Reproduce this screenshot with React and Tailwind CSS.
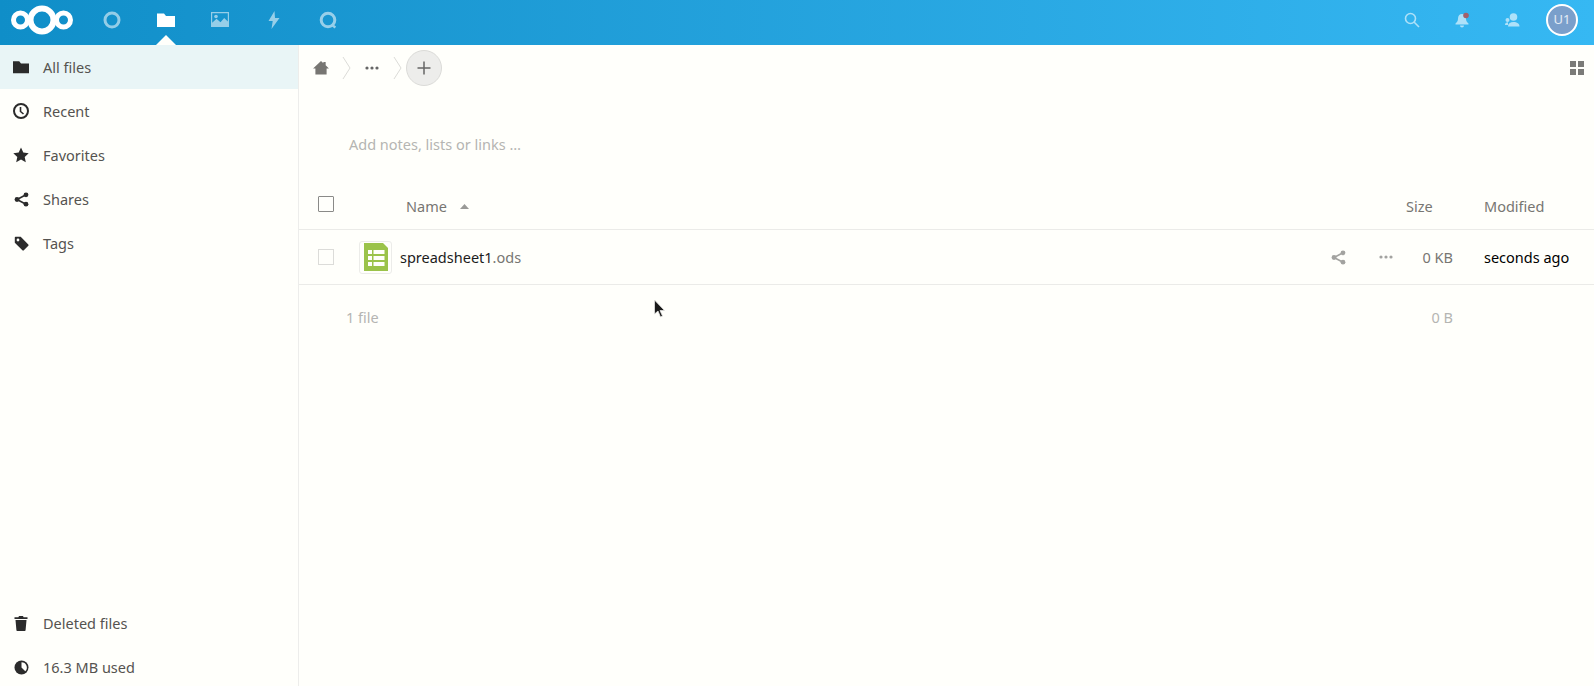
import React from "react";

const font = { fontFamily: '"Noto Sans", sans-serif' };

const Logo = () => (
  <svg width="62" height="30" viewBox="0 0 62 30" fill="none" stroke="#fff">
    <circle cx="31" cy="15" r="11.500" strokeWidth="6" />
    <circle cx="9.500" cy="15" r="7" strokeWidth="5" />
    <circle cx="52.500" cy="15" r="7" strokeWidth="5" />
  </svg>
);

const FolderIcon = ({ size = 18, color = "#fff" }) => (
  <svg width={size} height={size} viewBox="0 0 18 18" fill={color}>
    <path d="M0 2.500h7l2 2.500h9v11H0z" />
  </svg>
);

const navIcons = [
  <svg key="a" width="18" height="18" viewBox="0 0 18 18" fill="none" stroke="#fff" strokeWidth="3" opacity="0.55">
    <circle cx="9" cy="9" r="7" />
  </svg>,
  <FolderIcon key="b" />,
  <svg key="c" width="18" height="16" viewBox="0 0 18 16" opacity="0.55" fill="#fff">
    <path fillRule="evenodd" d="M0 0h18v15H0zM1.200 1.200v9.600l4.300-4 4 3.400 3.700-4.200 3.600 3.600V1.200z" />
    <circle cx="5" cy="4.500" r="1.800" />
  </svg>,
  <svg key="d" width="14" height="18" viewBox="0 0 14 18" fill="#fff" opacity="0.55">
    <path d="M7.500 0 1.500 10h4.200L4.500 18l8-11H8z" />
  </svg>,
  <svg key="e" width="18" height="18" viewBox="0 0 18 18" fill="none" stroke="#fff" strokeWidth="3" opacity="0.55">
    <circle cx="9" cy="9" r="6.800" />
    <path d="m13 14 3.400 2.400" strokeWidth="2.400" />
  </svg>,
];

const ClockIcon = () => (
  <svg width="16" height="16" viewBox="0 0 16 16" fill="none" stroke="#2b2b2b">
    <circle cx="8" cy="8" r="7" strokeWidth="2" />
    <path d="M7.500 4v4.500l3 2.500" strokeWidth="1.600" />
  </svg>
);
const StarIcon = () => (
  <svg width="16" height="16" viewBox="0 0 16 16" fill="#2b2b2b">
    <path d="m8 .6 2.300 5 5.400.6-4 3.700 1.100 5.400L8 12.600l-4.800 2.700 1.100-5.400-4-3.700 5.400-.6z" />
  </svg>
);
const ShareIcon = ({ color = "#2b2b2b" }) => (
  <svg width="15" height="15" viewBox="0 0 15 15" fill={color} stroke={color}>
    <circle cx="3" cy="7.500" r="2.400" stroke="none" />
    <circle cx="12" cy="2.800" r="2.400" stroke="none" />
    <circle cx="12" cy="12.200" r="2.400" stroke="none" />
    <path d="m3 7.500 9-4.700M3 7.500l9 4.700" strokeWidth="1.600" fill="none" />
  </svg>
);
const TagIcon = () => (
  <svg width="15" height="15" viewBox="0 0 15 15" fill="#2b2b2b">
    <path fillRule="evenodd" d="M1.500.8h5.200l7.600 7.600a1 1 0 0 1 0 1.400l-4.500 4.500a1 1 0 0 1-1.400 0L.8 6.700V1.500c0-.4.3-.7.7-.7zM4 2.600a1.400 1.400 0 1 0 0 2.800 1.400 1.400 0 0 0 0-2.800z" />
  </svg>
);
const TrashIcon = () => (
  <svg width="14" height="15" viewBox="0 0 14 15" fill="#2b2b2b">
    <path d="M5 0h4l.6 1.200H13.500v1.800H.5V1.200h3.900zM1.500 4h11l-.9 10c0 .6-.5 1-1 1H3.400c-.5 0-1-.4-1-1z" />
  </svg>
);
const QuotaIcon = () => (
  <svg width="15" height="15" viewBox="0 0 15 15">
    <circle cx="7.500" cy="7.500" r="7" fill="#2b2b2b" />
    <path d="M7.500 2.200a5.300 5.300 0 0 1 3.800 9L7.500 7.500z" fill="#fffffb" />
  </svg>
);

const NavRow = ({ icon, label, active }) => (
  <div className={`flex items-center h-[44px] ${active ? "bg-[#e9f5f6]" : ""}`}>
    <div className="w-[43px] flex justify-center pr-[1px] shrink-0">{icon}</div>
    <span className="text-[14.5px] text-[#555350] pt-[2px]">{label}</span>
  </div>
);

const Chevron = () => (
  <svg width="9" height="24" viewBox="0 0 9 24" fill="none" stroke="#dcdcd8">
    <path d="m1 1 7 11-7 11" />
  </svg>
);

const Dots = ({ color }) => (
  <svg width="14" height="4" viewBox="0 0 14 4" fill={color}>
    <circle cx="2" cy="2" r="1.600" />
    <circle cx="7" cy="2" r="1.600" />
    <circle cx="12" cy="2" r="1.600" />
  </svg>
);

export default function App() {
  return (
    <div style={font} className="relative h-[686px] w-[1594px] overflow-hidden bg-[#fffffb]">
      {/* top bar */}
      <header className="relative flex items-center justify-between h-[45px] pb-[5px] bg-gradient-to-r from-[#0f8ec8] to-[#36b8f3]">
        <div className="flex items-center">
          <div className="w-[85px] pl-[11px] flex items-center">
            <Logo />
          </div>
          {navIcons.map((ic, i) => (
            <div key={i} className="w-[54px] h-[40px] flex items-center justify-center">
              {ic}
            </div>
          ))}
        </div>
        <div className="flex items-center pr-[16px]">
          <div className="w-[50px] flex justify-center">
            <svg width="16" height="16" viewBox="0 0 16 16" fill="none" stroke="#fff" strokeWidth="1.600" opacity="0.6">
              <circle cx="6.500" cy="6.500" r="5" />
              <path d="m10 10 5 5" />
            </svg>
          </div>
          <div className="w-[50px] flex justify-center">
            <svg width="14" height="15" viewBox="0 0 14 15" className="overflow-visible">
              <path d="M7 1c2.500 0 4 2 4 4.500 0 2.500 1 3.500 2.500 5v1h-13v-1C2 9 3 8 3 5.500 3 3 4.500 1 7 1zM5 12.500h4a2 2 0 0 1-4 0z" fill="#fff" opacity="0.6" />
              <circle cx="11" cy="2.500" r="2.800" fill="#a3606a" />
            </svg>
          </div>
          <div className="w-[50px] flex justify-center">
            <svg width="15" height="14" viewBox="0 0 15 14" fill="#fff" opacity="0.6">
              <circle cx="8.500" cy="4" r="3.800" />
              <path d="M3 13.500c0-3 2-4.500 5.500-4.500s6 1.500 6 4.500z" />
              <circle cx="2.500" cy="7" r="2" />
              <path d="M0 12c0-2 1-2.800 3-2.800V12z" />
            </svg>
          </div>
          <div className="ml-[9px] w-[32px] h-[32px] rounded-full border-2 border-white bg-[#7a9fcb] text-white/80 text-[13px] flex items-center justify-center">
            U1
          </div>
        </div>
        {/* active app arrow */}
        <div className="absolute left-[156px] bottom-0 w-0 h-0 border-x-[10px] border-x-transparent border-b-[10px] border-b-[#fffffb]" />
      </header>

      <div className="flex h-[645px]">
        {/* sidebar */}
        <aside className="w-[299px] shrink-0 border-r border-[#ededeb] flex flex-col justify-between">
          <div>
            <NavRow icon={<FolderIcon size={16} color="#2b2b2b" />} label="All files" active />
            <NavRow icon={<ClockIcon />} label="Recent" />
            <NavRow icon={<StarIcon />} label="Favorites" />
            <NavRow icon={<ShareIcon />} label="Shares" />
            <NavRow icon={<TagIcon />} label="Tags" />
          </div>
          <div className="mb-[1px]">
            <NavRow icon={<TrashIcon />} label="Deleted files" />
            <NavRow icon={<QuotaIcon />} label="16.3 MB used" />
          </div>
        </aside>

        {/* file list */}
        <main className="flex-1 min-w-0">
          <div className="flex items-center h-[45px] pl-[14px] pr-[10px]">
            <svg width="16" height="14" viewBox="0 0 17 15" fill="#777672">
              <path d="M8.500 0 11 2.300V1h2.500v3.600L17 8h-2.500v6.500h-12V8H0z" />
            </svg>
            <div className="ml-[13px]"><Chevron /></div>
            <div className="ml-[14px]"><Dots color="#666" /></div>
            <div className="ml-[14px]"><Chevron /></div>
            <div className="ml-[4px] w-[36px] h-[36px] rounded-full bg-[#ededeb] border border-[#dbdbd8] flex items-center justify-center">
              <svg width="14" height="14" viewBox="0 0 14 14" stroke="#666" strokeWidth="1.500">
                <path d="M7 .5v13M.5 7h13" />
              </svg>
            </div>
            <div className="ml-auto grid grid-cols-2 gap-[2px]">
              <span className="w-[6px] h-[6px] bg-[#7b7b78]" />
              <span className="w-[6px] h-[6px] bg-[#7b7b78]" />
              <span className="w-[6px] h-[6px] bg-[#7b7b78]" />
              <span className="w-[6px] h-[6px] bg-[#7b7b78]" />
            </div>
          </div>

          <div className="h-[93px] pl-[50px] pt-[43px] text-[14.5px] text-[#b5b5b2] leading-[22px]">
            Add notes, lists or links …
          </div>

          <div className="flex items-center h-[46px] box-content border-b border-[#ebebe8] text-[14.5px] text-[#777672]">
            <div className="w-[107px] pl-[19px] pb-[4px]">
              <div className="w-[16px] h-[16px] border border-[#8a8a88] rounded-[1px]" />
            </div>
            <span className="pt-[2px]">Name</span>
            <svg className="ml-[13px]" width="9" height="5" viewBox="0 0 9 5" fill="#9a9a97">
              <path d="M4.500 0 9 5H0z" />
            </svg>
            <span className="ml-auto w-[78px] pt-[2px]">Size</span>
            <span className="w-[110px] pt-[2px]">Modified</span>
          </div>

          <div className="flex items-center h-[55px] border-b border-[#ebebe8] text-[14.5px]">
            <div className="w-[60px] pl-[19px] shrink-0">
              <div className="w-[16px] h-[16px] border border-[#dcdcd9]" />
            </div>
            <div className="w-[33px] h-[33px] rounded-[3px] border border-[#ecece9] flex items-center justify-center shrink-0">
              <svg width="24" height="28" viewBox="0 0 24 28">
                <path d="M0 0h19l5 5v23H0z" fill="#9bc34a" />
                <g fill="#fffffb">
                  <rect x="4" y="7" width="4" height="4" />
                  <rect x="9.500" y="7" width="11" height="4" />
                  <rect x="4" y="13" width="4" height="4" />
                  <rect x="9.500" y="13" width="11" height="4" />
                  <rect x="4" y="19" width="4" height="4" />
                  <rect x="9.500" y="19" width="11" height="4" />
                </g>
              </svg>
            </div>
            <span className="ml-[8px] pt-[2px] text-[#1c1c1c]">
              spreadsheet1<span className="text-[#777672]">.ods</span>
            </span>
            <div className="ml-auto flex items-center">
              <ShareIcon color="#a3a3a0" />
              <div className="ml-[33px]"><Dots color="#a3a3a0" /></div>
            </div>
            <span className="w-[60px] pt-[2px] text-right text-[#777672]">0 KB</span>
            <span className="w-[141px] pt-[2px] pl-[31px] text-black">seconds ago</span>
          </div>

          <div className="flex items-center h-[64px] pl-[47px] text-[14.5px] text-[#b5b5b2]">
            <span className="pt-[2px]">1 file</span>
            <span className="ml-auto mr-[141px] pt-[2px]">0 B</span>
          </div>
        </main>
      </div>

      {/* mouse pointer caught in the screenshot */}
      <svg className="absolute left-[653px] top-[299px]" width="13" height="21" viewBox="0 0 13 21">
        <path d="M1.500 1v14l3.500-3 2.500 6 2-1-2.500-5.500h4.500z" fill="#1a1a1a" stroke="#e4e4e2" strokeWidth="0.800" />
      </svg>
    </div>
  );
}
